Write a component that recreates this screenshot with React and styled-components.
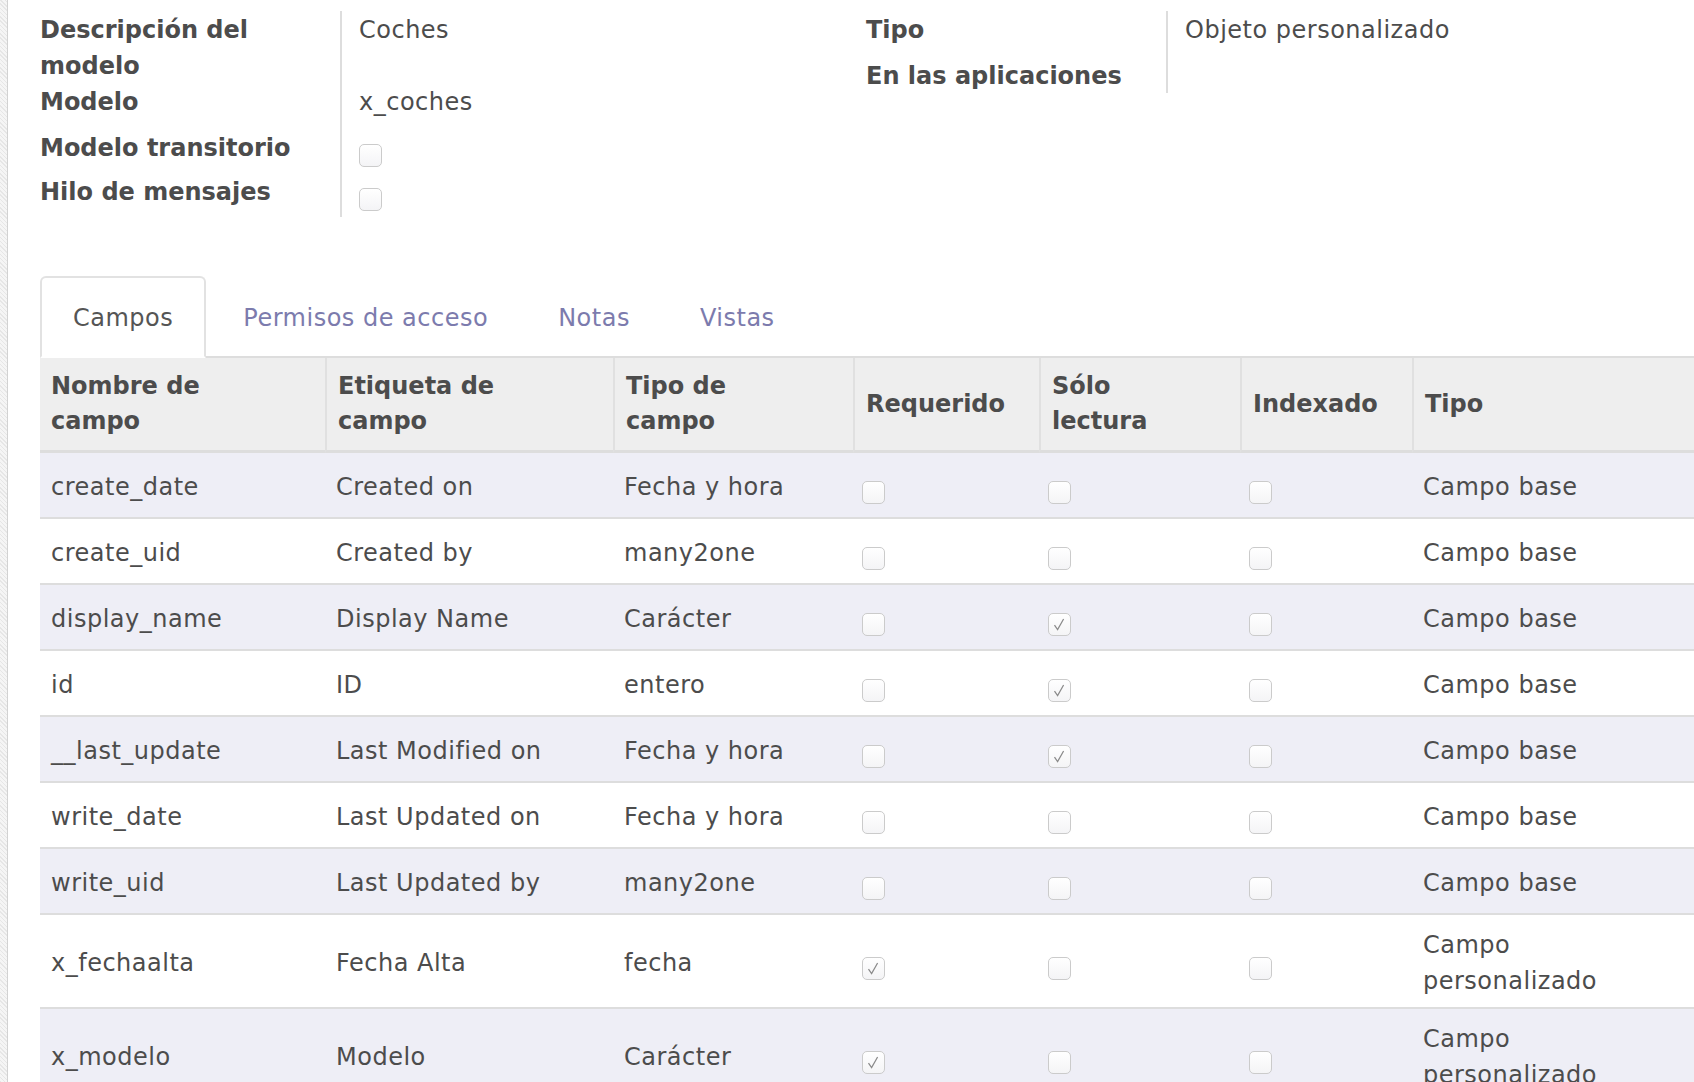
import React from 'react';
import styled, { createGlobalStyle } from 'styled-components';

const GlobalStyle = createGlobalStyle`
  html, body {
    margin: 0;
    padding: 0;
    background: #ffffff;
    overflow: hidden;
  }
  body {
    font-family: "DejaVu Sans", "Open Sans", sans-serif;
    font-size: 24px;
    letter-spacing: 0.5px;
    color: #4c4c4c;
  }
`;

const Page = styled.div`
  display: flex;
  width: 1694px;
  height: 1082px;
  overflow: hidden;
`;

const Gutter = styled.div`
  width: 7px;
  flex-shrink: 0;
  background: repeating-linear-gradient(45deg, #e6e6e6 0 1px, #f5f5f5 1px 3px);
  border-right: 1px solid #d2d2d2;
`;

const Sheet = styled.div`
  flex: 1;
  min-width: 0;
  padding: 11px 0 0 32px;
`;

const Groups = styled.div`
  display: flex;
  align-items: flex-start;
`;

const Group = styled.div`
  display: grid;
  grid-template-columns: 300px 1fr;
  grid-template-rows: ${p => p.$rows};
  width: ${p => p.$width || 'auto'};
  flex: ${p => (p.$width ? 'none' : '1')};
`;

const Label = styled.div`
  font-weight: bold;
  letter-spacing: 0;
  line-height: 36px;
  padding: 1px 16px 0 0;
  white-space: nowrap;
`;

const Value = styled.div`
  border-left: 2px solid #dddddd;
  padding: 1px 0 0 17px;
  line-height: 36px;
`;

const Box = styled.span`
  display: inline-flex;
  align-items: center;
  justify-content: center;
  box-sizing: border-box;
  width: 23px;
  height: 23px;
  border: 1px solid #cbcbcb;
  border-radius: 5px;
  background: linear-gradient(#ffffff, #f4f4f6);
  margin-top: ${p => p.$offset || 0}px;
  vertical-align: top;
`;

const Tabs = styled.ul`
  display: flex;
  list-style: none;
  margin: 59px 0 0;
  padding: 0;
  border-bottom: 2px solid #dddddd;
`;

const Tab = styled.li`
  margin: 0 4px -2px 0;
  padding: 22px 31px 20px;
  line-height: 36px;
  white-space: nowrap;
  border: 2px solid ${p => (p.$active ? '#e2e2e2' : 'transparent')};
  border-bottom-color: ${p => (p.$active ? '#ffffff' : 'transparent')};
  border-radius: 6px 6px 0 0;
  background: ${p => (p.$active ? '#ffffff' : 'transparent')};
  color: ${p => (p.$active ? '#555555' : '#7c7bad')};
`;

const Table = styled.table`
  table-layout: fixed;
  width: 1700px;
  border-collapse: separate;
  border-spacing: 0;
`;

const Th = styled.th`
  background: #eeeeee;
  text-align: left;
  vertical-align: middle;
  font-weight: bold;
  letter-spacing: 0;
  line-height: 35px;
  padding: 11px 11px 11px;
  white-space: nowrap;
  border-bottom: 3px solid #dddddd;
  border-left: ${p => (p.$first ? 'none' : '2px solid #e0e0e0')};
`;

const Row = styled.tr`
  height: 66px;
  background: ${p => (p.$striped ? '#eeeef6' : '#ffffff')};
`;

const Td = styled.td`
  vertical-align: middle;
  line-height: 35.5px;
  padding: 13px 11px 8px;
  border-bottom: 2px solid #dddddd;
  padding-left: ${p => (p.$check ? '9px' : '11px')};
  white-space: nowrap;
`;

const TypeText = styled.span`
  display: block;
  max-width: 240px;
  white-space: normal;
`;

const Check = ({ checked, offset }) => (
  <Box $offset={offset}>
    {checked && (
      <svg width="21" height="21" viewBox="0 0 21 21">
        <path d="M5.5 11.2 L8.6 15.6 L14.6 5" fill="none" stroke="#8a8a8a" strokeWidth="1.25" />
      </svg>
    )}
  </Box>
);

const widths = [285, 288, 240, 186, 201, 172, 328];

const headers = [
  ['Nombre de', 'campo'],
  ['Etiqueta de', 'campo'],
  ['Tipo de', 'campo'],
  ['Requerido'],
  ['Sólo', 'lectura'],
  ['Indexado'],
  ['Tipo'],
];

const fields = [
  ['create_date', 'Created on', 'Fecha y hora', false, false, false, 'Campo base'],
  ['create_uid', 'Created by', 'many2one', false, false, false, 'Campo base'],
  ['display_name', 'Display Name', 'Carácter', false, true, false, 'Campo base'],
  ['id', 'ID', 'entero', false, true, false, 'Campo base'],
  ['__last_update', 'Last Modified on', 'Fecha y hora', false, true, false, 'Campo base'],
  ['write_date', 'Last Updated on', 'Fecha y hora', false, false, false, 'Campo base'],
  ['write_uid', 'Last Updated by', 'many2one', false, false, false, 'Campo base'],
  ['x_fechaalta', 'Fecha Alta', 'fecha', true, false, false, 'Campo personalizado'],
  ['x_modelo', 'Modelo', 'Carácter', true, false, false, 'Campo personalizado'],
];

const App = () => (
  <Page>
    <GlobalStyle />
    <Gutter />
    <Sheet>
      <Groups>
        <Group $width="826px" $rows="72px 46px 44px 44px">
          <Label>Descripción del<br />modelo</Label>
          <Value>Coches</Value>
          <Label>Modelo</Label>
          <Value>x_coches</Value>
          <Label>Modelo transitorio</Label>
          <Value><Check offset={14} /></Value>
          <Label>Hilo de mensajes</Label>
          <Value><Check offset={14} /></Value>
        </Group>
        <Group $rows="46px 36px">
          <Label>Tipo</Label>
          <Value>Objeto personalizado</Value>
          <Label>En las aplicaciones</Label>
          <Value />
        </Group>
      </Groups>

      <Tabs>
        <Tab $active>Campos</Tab>
        <Tab>Permisos de acceso</Tab>
        <Tab>Notas</Tab>
        <Tab>Vistas</Tab>
      </Tabs>

      <Table>
        <colgroup>
          {widths.map((w, i) => <col key={i} style={{ width: w }} />)}
        </colgroup>
        <thead>
          <tr>
            {headers.map((h, i) => (
              <Th key={i} $first={i === 0}>
                {h.map((line, j) => (
                  <React.Fragment key={j}>
                    {j > 0 && <br />}
                    {line}
                  </React.Fragment>
                ))}
              </Th>
            ))}
          </tr>
        </thead>
        <tbody>
          {fields.map((f, i) => (
            <Row key={f[0]} $striped={i % 2 === 0}>
              <Td>{f[0]}</Td>
              <Td>{f[1]}</Td>
              <Td>{f[2]}</Td>
              <Td $check><Check checked={f[3]} offset={11} /></Td>
              <Td $check><Check checked={f[4]} offset={11} /></Td>
              <Td $check><Check checked={f[5]} offset={11} /></Td>
              <Td><TypeText>{f[6]}</TypeText></Td>
            </Row>
          ))}
        </tbody>
      </Table>
    </Sheet>
  </Page>
);

export default App;
